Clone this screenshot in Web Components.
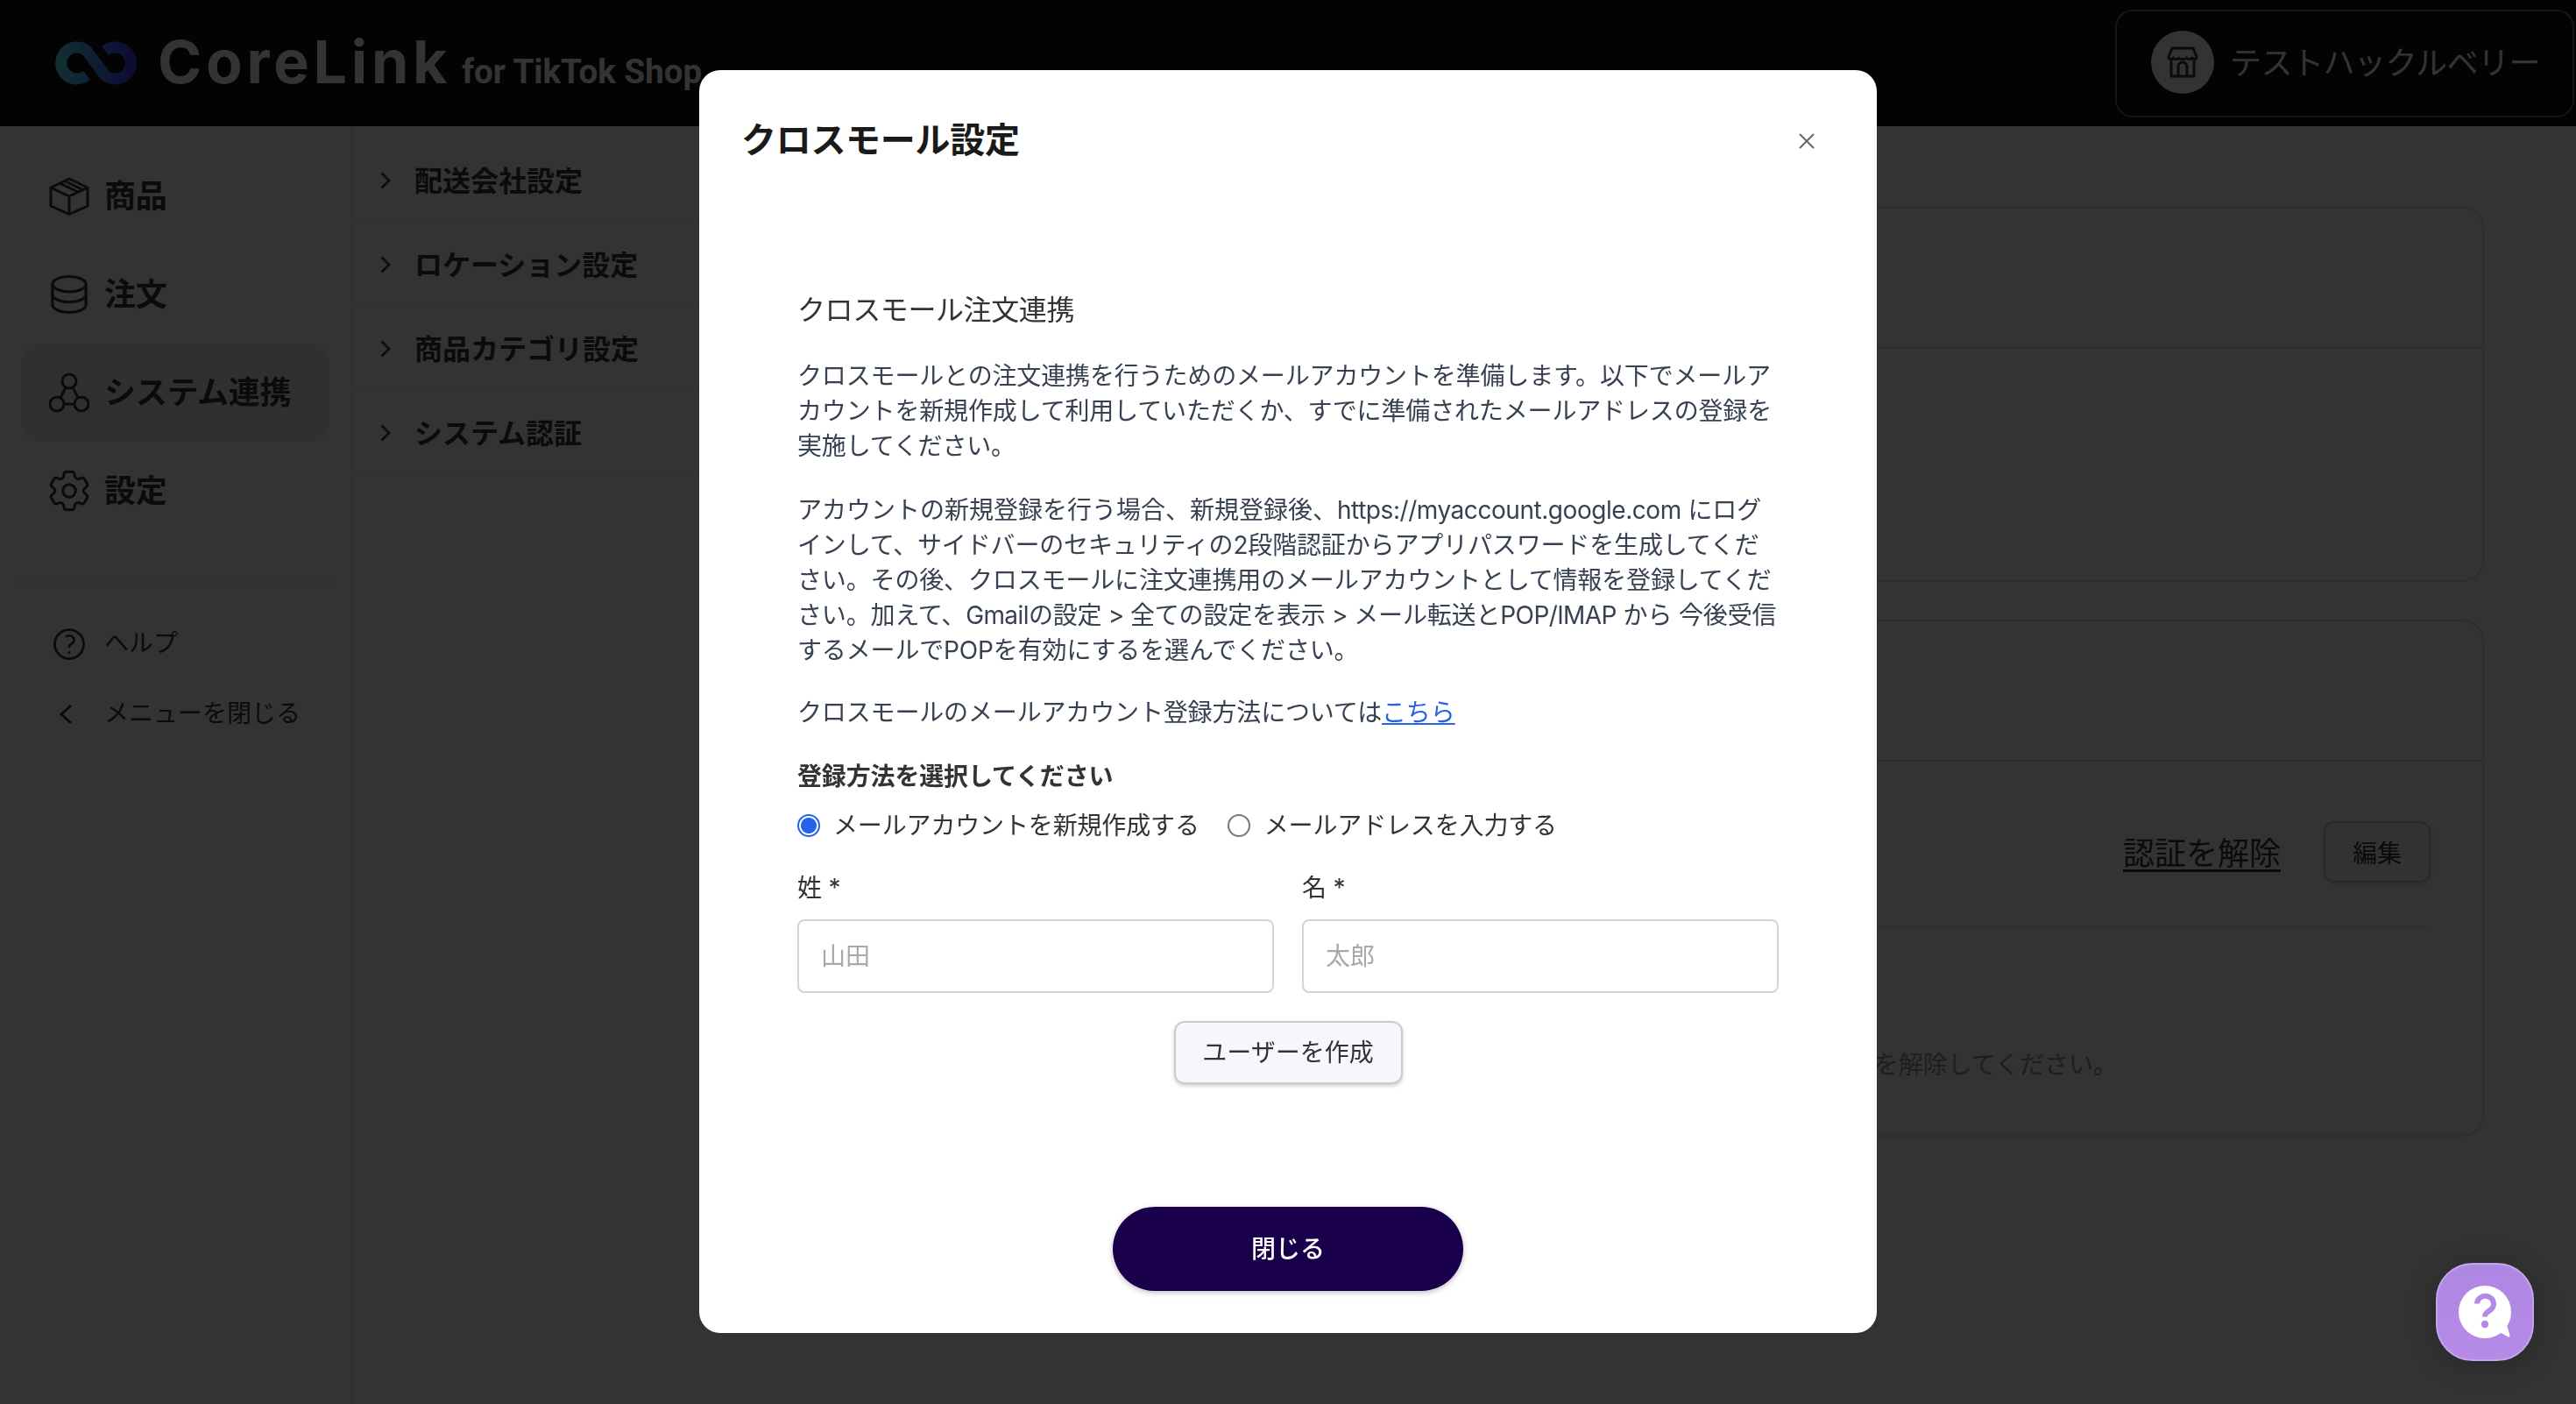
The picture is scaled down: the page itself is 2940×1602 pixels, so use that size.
<!DOCTYPE html>
<html lang="ja">
    <head>
        <title>CoreLink</title>
        <style>
            html, body { margin: 0; height: 100%; overflow: hidden; }
            body { font-family: Inter, "Noto Sans CJK JP", sans-serif; background: #fff; color: #373737; }
        </style>

        <!-- ---------------------------------------------------------------------------- HEADER -->
        <template id="app-header">
            <style>
                :host { display: flex; align-items: center; justify-content: space-between; height: 144px; background: #0f0f0f; padding: 0 2px 0 63px; box-sizing: border-box; flex: none; }
                .logo { display: flex; align-items: center; }
                .logo svg { flex: none; margin-right: 24px; }
                .name { display: flex; align-items: baseline; color: #fff; white-space: nowrap; margin-bottom: 4px; }
                .core { font: 700 68px/1 Inter, sans-serif; letter-spacing: 4.75px; margin-right: 12px; }
                .sub { font: 700 38.5px/1 Roboto, sans-serif; }
            </style>
            <div class="logo">
                <svg width="93" height="48" viewBox="0 0 93 48" fill="none" style="overflow:visible">
                    <defs>
                        <linearGradient id="inf" x1="0" x2="1" y1="0" y2="0">
                            <stop offset="0" stop-color="#58e8ff"></stop>
                            <stop offset="1" stop-color="#4040ff"></stop>
                        </linearGradient>
                    </defs>
                    <path d="M36 38A18 18 0 1 1 36 10L57 38A18 18 0 1 0 57 10" stroke="url(#inf)" stroke-width="13"></path>
                </svg>
                <div class="name"><span class="core">CoreLink</span><span class="sub">for TikTok Shop</span></div>
            </div>
            <slot></slot>
        </template>

        <template id="store-pill">
            <style>
                :host { display: flex; align-items: center; width: 524px; height: 123px; box-sizing: border-box; border: 2px solid #696969; border-radius: 20px; padding-left: 39px; color: #fff; font-size: 36px; letter-spacing: -.5px; white-space: nowrap; }
                .avatar { width: 72px; height: 72px; border-radius: 50%; background: #fff; display: flex; align-items: center; justify-content: center; margin-right: 18px; margin-top: -2px; }
                .label { margin-top: -6px; }
            </style>
            <div class="avatar"><slot name="icon"></slot></div>
            <div class="label"><slot></slot></div>
        </template>

        <!-- ---------------------------------------------------------------------------- SIDEBAR -->
        <template id="side-nav">
            <style>
                :host { display: block; width: 400px; flex: none; padding: 24px 24px 0 24px; box-sizing: border-box; }
                .rule { height: 2px; background: #ececec; margin: 47px -2px 30px -4px; }
            </style>
            <slot name="main"></slot>
            <div class="rule"></div>
            <slot name="foot"></slot>
        </template>

        <template id="nav-item">
            <style>
                :host { display: flex; align-items: center; height: 112px; padding-left: 32px; border-radius: 20px; font-size: 36px; font-weight: 700; letter-spacing: -.3px; white-space: nowrap; }
                :host([active]) { background: #f0f0f0; }
                :host([small]) { height: 80px; font-size: 28px; font-weight: 400; letter-spacing: 0; }
                .icon { width: 46px; margin-right: 17px; display: flex; justify-content: center; flex: none; }
                .label { margin-bottom: 6px; }
            </style>
            <div class="icon"><slot name="icon"></slot></div>
            <span class="label"><slot></slot></span>
        </template>

        <template id="sub-nav">
            <style>
                :host { display: block; width: 400px; flex: none; padding-top: 15px; box-sizing: border-box; border-left: 2px solid #f0f0f0; }
            </style>
            <slot></slot>
        </template>

        <template id="sub-item">
            <style>
                :host { display: flex; align-items: center; height: 96px; box-sizing: border-box; padding-left: 32px; border-bottom: 2px solid #f0f0f0; font-size: 32px; font-weight: 700; white-space: nowrap; }
                svg { margin-right: 27px; flex: none; }
                .label { margin-bottom: 4px; }
            </style>
            <svg width="12" height="20" viewBox="0 0 12 20" fill="none" stroke="#373737" stroke-width="2.6"><path d="M1.5 1.5L10 10L1.5 18.5"></path></svg>
            <span class="label"><slot></slot></span>
        </template>

        <!-- ---------------------------------------------------------------------------- MAIN -->
        <template id="main-panel">
            <style>
                :host { display: flex; flex-direction: column; gap: 43px; flex: 1; padding: 92px 105px 0 0; box-sizing: border-box; min-width: 0; }
            </style>
            <slot></slot>
        </template>

        <template id="info-card">
            <style>
                :host { display: block; border: 2px solid #e0e0e0; border-radius: 24px; box-sizing: border-box; }
                .head { height: 160px; border-bottom: 2px solid #e0e0e0; box-sizing: border-box; }
            </style>
            <div class="head"></div>
            <slot></slot>
        </template>

        <template id="auth-row">
            <style>
                :host { display: flex; align-items: center; justify-content: flex-end; gap: 49px; height: 190px; margin: 0 59px; border-bottom: 2px solid #e4e4e4; box-sizing: border-box; padding-top: 18px; }
                a { font-size: 36px; color: #373737; text-decoration: underline; text-underline-offset: 5px; margin-bottom: 3px; }
                button { width: 122px; height: 70px; font: 400 28px Inter, "Noto Sans CJK JP", sans-serif; color: #373737; background: #f6f7fb; border: 2px solid #ccc; border-radius: 12px; box-shadow: 0 2px 4px rgba(0,0,0,.15); padding: 0; }
            </style>
            <a>認証を解除</a>
            <button>編集</button>
        </template>

        <template id="card-note">
            <style>
                :host { display: block; padding: 136px 416px 0 0; text-align: right; font-size: 28px; line-height: 40px; color: #8d95a3; white-space: nowrap; }
            </style>
            <slot></slot>
        </template>

        <!-- ---------------------------------------------------------------------------- MODAL -->
        <template id="modal-dialog">
            <style>
                :host { position: fixed; inset: 0; z-index: 10; display: flex; justify-content: center; align-items: flex-start; padding-top: 80px; box-sizing: border-box; background: rgba(0,0,0,.8); }
                .panel { width: 1344px; height: 1441px; background: #fff; border-radius: 24px; display: flex; flex-direction: column; box-sizing: border-box; }
                header { display: flex; justify-content: space-between; align-items: center; padding: 52px 70px 0 48px; }
                h1 { margin: 0; font-size: 40px; line-height: 56px; font-weight: 700; letter-spacing: -.3px; color: #1a1a1a; }
                svg { margin-top: 2px; }
                .body { padding: 0 112px; flex: 1; }
                footer { display: flex; justify-content: center; padding-bottom: 48px; }
                footer button { width: 400px; height: 96px; border: 0; border-radius: 48px; background: #1a004a; color: #fff; font: 500 28px Inter, "Noto Sans CJK JP", sans-serif; box-shadow: 0 2px 6px rgba(0,0,0,.25); padding: 0 0 4px; }
            </style>
            <div class="panel">
                <header>
                    <h1><slot name="title"></slot></h1>
                    <svg width="20" height="20" viewBox="0 0 20 20" fill="none" stroke="#666" stroke-width="2"><path d="M2 2L18 18M18 2L2 18"></path></svg>
                </header>
                <div class="body"><slot></slot></div>
                <footer><button><slot name="close"></slot></button></footer>
            </div>
        </template>

        <template id="cross-mail-form">
            <style>
                :host { display: block; font-size: 28px; line-height: 40px; letter-spacing: -.15px; color: #374151; white-space: nowrap; }
                h2 { margin: 144px 0 33px; font-size: 32px; line-height: 44px; font-weight: 400; letter-spacing: -.4px; color: #333; }
                p { margin: 0 0 33px; }
                p + p { margin-bottom: 31px; }
                a { color: #2563eb; text-decoration: underline; }
                .plain { letter-spacing: 0; }
                .en { letter-spacing: -.45px; }
                .tight { letter-spacing: -.6px; }
                .legend { margin-top: 33px; font-weight: 700; color: #333; }
                .choices { display: flex; align-items: center; gap: 32px; margin-top: 16px; color: #333; }
                label.choice { display: flex; align-items: center; gap: 15px; }
                label.choice + label.choice { gap: 16px; }
                input[type=radio] { appearance: none; width: 26px; height: 26px; margin: 0; border-radius: 50%; border: 2px solid #777; background: #fff; box-sizing: border-box; }
                input[type=radio]:checked { border-color: #2563eb; background: radial-gradient(circle, #2563eb 0 8.5px, #fff 9.5px); }
                .names { display: grid; grid-template-columns: 544px 544px; gap: 17px 32px; margin-top: 31px; color: #333; }
                .names input { display: block; box-sizing: border-box; width: 100%; height: 84px; margin-top: 16px; padding: 0 25px; border: 2px solid #d1d5db; border-radius: 8px; font: 400 28px Inter, "Noto Sans CJK JP", sans-serif; color: #333; background: #fff; outline: 0; }
                .names input::placeholder { color: #a8a8a8; opacity: 1; }
                .action { display: flex; justify-content: center; margin-top: 32px; }
                .action button { width: 261px; height: 72px; padding: 0 0 4px; font: 400 28px Inter, "Noto Sans CJK JP", sans-serif; color: #333; background: #f6f7fb; border: 2px solid #ccc; border-radius: 12px; box-shadow: 0 2px 4px rgba(0,0,0,.2); }
            </style>
            <h2>クロスモール注文連携</h2>
            <p>クロスモールとの注文連携を行うためのメールアカウントを準備します。以下でメールア<br>カウントを新規作成して利用していただくか、すでに準備されたメールアドレスの登録を<br>実施してください。</p>
            <p><span class="plain">アカウントの新規登録を行う場合、新規登録後、</span><span class="en">https://myaccount.google.com</span> にログ<br>インして、サイドバーのセキュリティの2段階認証からアプリパスワードを生成してくだ<br>さい。その後、クロスモールに注文連携用のメールアカウントとして情報を登録してくだ<br>さい。加えて、<span class="tight">Gmail</span>の設定<span class="tight"> &gt; </span>全ての設定を表示<span class="tight"> &gt; </span>メール転送と<span class="tight">POP/IMAP</span> から 今後受信<br>するメールでPOPを有効にするを選んでください。</p>
            <p style="margin:0">クロスモールのメールアカウント登録方法については<a>こちら</a></p>
            <div class="legend">登録方法を選択してください</div>
            <div class="choices">
                <label class="choice"><input type="radio" name="method" checked>メールアカウントを新規作成する</label>
                <label class="choice"><input type="radio" name="method">メールアドレスを入力する</label>
            </div>
            <div class="names">
                <label>姓 *<input placeholder="山田"></label>
                <label>名 *<input placeholder="太郎"></label>
            </div>
            <div class="action"><button>ユーザーを作成</button></div>
        </template>

        <!-- ---------------------------------------------------------------------------- FAB -->
        <template id="help-fab">
            <style>
                :host { position: fixed; right: 48px; bottom: 49px; z-index: 20; width: 112px; height: 112px; box-sizing: border-box; border: 2px solid #c3a3ec; border-radius: 42px; background: linear-gradient(#ae87e3, #b78ae8); box-shadow: 0 4px 30px rgba(0,0,0,.25); }
                svg { display: block; margin: -2px; }
            </style>
            <svg width="112" height="112" viewBox="0 0 112 112">
                <circle cx="56" cy="56" r="30" fill="#fff"></circle>
                <path d="M74 78L83 83L79 70Z" fill="#fff" stroke="#fff" stroke-width="3" stroke-linejoin="round"></path>
                <path d="M47 46.5a9.5 8.8 0 1 1 15.5 7c-3.4 2.6-6.5 3.4-6.5 8" fill="none" stroke="#b388e6" stroke-width="6"></path>
                <circle cx="56" cy="70" r="4.2" fill="#b388e6"></circle>
            </svg>
        </template>

        <script>
            class ShadowElement extends HTMLElement
            {
                constructor()
                {
                    super();
                    this.attachShadow({ mode: 'open' }).appendChild(
                        document.querySelector('template#' + this.localName).content.cloneNode(true));
                }
            }
            class AppHeader extends ShadowElement {}
            class StorePill extends ShadowElement {}
            class SideNav extends ShadowElement {}
            class NavItem extends ShadowElement {}
            class SubNav extends ShadowElement {}
            class SubItem extends ShadowElement {}
            class MainPanel extends ShadowElement {}
            class InfoCard extends ShadowElement {}
            class AuthRow extends ShadowElement {}
            class CardNote extends ShadowElement {}
            class ModalDialog extends ShadowElement {}
            class CrossMailForm extends ShadowElement {}
            class HelpFab extends ShadowElement {}
            window.customElements.define('app-header', AppHeader);
            window.customElements.define('store-pill', StorePill);
            window.customElements.define('side-nav', SideNav);
            window.customElements.define('nav-item', NavItem);
            window.customElements.define('sub-nav', SubNav);
            window.customElements.define('sub-item', SubItem);
            window.customElements.define('main-panel', MainPanel);
            window.customElements.define('info-card', InfoCard);
            window.customElements.define('auth-row', AuthRow);
            window.customElements.define('card-note', CardNote);
            window.customElements.define('modal-dialog', ModalDialog);
            window.customElements.define('cross-mail-form', CrossMailForm);
            window.customElements.define('help-fab', HelpFab);
        </script>
    </head>
    <body>
        <app-header>
            <store-pill>
                <svg slot="icon" width="36" height="38" viewBox="0 0 36 38" fill="none" stroke="#373737" stroke-width="3" stroke-linejoin="round" style="display:block">
                    <path d="M6 3H30L34 13C34 16 30 16 29 14C28 16 23 16 22.500 14C22 16 14 16 13.500 14C13 16 8 16 7 14C6 16 2 16 2 13Z"></path>
                    <path d="M5 16V35H31V16"></path>
                    <path d="M13 35V24A5 5 0 0 1 23 24V35"></path>
                </svg>
                テストハックルベリー
            </store-pill>
        </app-header>
        <div style="display:flex;height:calc(100vh - 144px)">
            <side-nav>
                <nav-item slot="main">
                    <svg slot="icon" width="46" height="44" viewBox="0 0 46 44" fill="none" stroke="#373737" stroke-width="3" stroke-linejoin="round">
                        <path d="M23 2L44 12V33L23 42.500L2 33V12Z"></path>
                        <path d="M2 12L23 22L44 12M23 22V42.500"></path>
                        <path d="M12 7L33 17M18 4.500L38.500 14.500"></path>
                    </svg>
                    商品
                </nav-item>
                <nav-item slot="main">
                    <svg slot="icon" width="44" height="44" viewBox="2.500 1.500 19 21" preserveAspectRatio="none" fill="none" stroke="#373737" stroke-width="1.400">
                        <path d="M20.250 6.375c0 2.278-3.694 4.125-8.250 4.125S3.750 8.653 3.750 6.375m16.500 0c0-2.278-3.694-4.125-8.250-4.125S3.750 4.097 3.750 6.375m16.500 0v11.250c0 2.278-3.694 4.125-8.250 4.125s-8.250-1.847-8.250-4.125V6.375m16.500 5.625c0 2.278-3.694 4.125-8.250 4.125S3.750 14.278 3.750 12"></path>
                    </svg>
                    注文
                </nav-item>
                <nav-item slot="main" active>
                    <svg slot="icon" width="46" height="46" viewBox="0 0 46 46" fill="none" stroke="#373737" stroke-width="3">
                        <circle cx="23" cy="10" r="8"></circle>
                        <circle cx="9" cy="36" r="8"></circle>
                        <circle cx="37" cy="36" r="8"></circle>
                        <path d="M19 17L13 29M27 17L33 29M17 36H29"></path>
                    </svg>
                    システム連携
                </nav-item>
                <nav-item slot="main">
                    <svg slot="icon" width="58" height="58" viewBox="0 0 24 24" fill="none" stroke="#373737" stroke-width="1.250" stroke-linejoin="round" style="margin:-6px">
                        <path d="M9.594 3.940c.090-.542.560-.940 1.110-.940h2.593c.550 0 1.020.398 1.110.940l.213 1.281c.063.374.313.686.645.870.074.040.147.083.220.127.325.196.720.257 1.075.124l1.217-.456a1.125 1.125 0 011.370.490l1.296 2.247a1.125 1.125 0 01-.260 1.431l-1.003.827c-.293.240-.438.613-.431.992a6.759 6.759 0 010 .255c-.007.378.138.750.430.990l1.005.828c.424.350.534.954.260 1.430l-1.298 2.247a1.125 1.125 0 01-1.369.491l-1.217-.456c-.355-.133-.750-.072-1.076.124a6.570 6.570 0 01-.220.128c-.331.183-.581.495-.644.869l-.213 1.280c-.090.543-.560.941-1.110.941h-2.594c-.550 0-1.020-.398-1.110-.940l-.213-1.281c-.062-.374-.312-.686-.644-.870a6.520 6.520 0 01-.220-.127c-.325-.196-.720-.257-1.076-.124l-1.217.456a1.125 1.125 0 01-1.369-.490l-1.297-2.247a1.125 1.125 0 01.260-1.431l1.004-.827c.292-.240.437-.613.430-.992a6.932 6.932 0 010-.255c.007-.378-.138-.750-.430-.990l-1.004-.828a1.125 1.125 0 01-.260-1.430l1.297-2.247a1.125 1.125 0 011.370-.491l1.216.456c.356.133.751.072 1.076-.124.072-.044.146-.087.220-.128.332-.183.582-.495.644-.869l.214-1.281z"></path>
                        <path d="M15 12a3 3 0 11-6 0 3 3 0 016 0z"></path>
                    </svg>
                    設定
                </nav-item>
                <nav-item slot="foot" small>
                    <svg slot="icon" width="44" height="44" viewBox="0 0 24 24" fill="none" stroke="#373737" stroke-width="1.500">
                        <path d="M9.879 7.519c1.171-1.025 3.071-1.025 4.242 0 1.172 1.025 1.172 2.687 0 3.712-.203.179-.430.326-.670.442-.745.361-1.450.999-1.450 1.827v.750M21 12a9 9 0 11-18 0 9 9 0 0118 0zm-9 5.250h.008v.008H12v-.008z"></path>
                    </svg>
                    ヘルプ
                </nav-item>
                <nav-item slot="foot" small>
                    <svg slot="icon" width="16" height="24" viewBox="0 0 16 24" fill="none" stroke="#373737" stroke-width="3" style="margin-right:8px"><path d="M14 2L3 12L14 22"></path></svg>
                    メニューを閉じる
                </nav-item>
            </side-nav>
            <sub-nav>
                <sub-item>配送会社設定</sub-item>
                <sub-item>ロケーション設定</sub-item>
                <sub-item>商品カテゴリ設定</sub-item>
                <sub-item>システム認証</sub-item>
            </sub-nav>
            <main-panel>
                <info-card style="height:428px"></info-card>
                <info-card style="height:590px">
                    <auth-row></auth-row>
                    <card-note>を解除してください。</card-note>
                </info-card>
            </main-panel>
        </div>
        <modal-dialog>
            <span slot="title">クロスモール設定</span>
            <cross-mail-form></cross-mail-form>
            <span slot="close">閉じる</span>
        </modal-dialog>
        <help-fab></help-fab>
    </body>
</html>
